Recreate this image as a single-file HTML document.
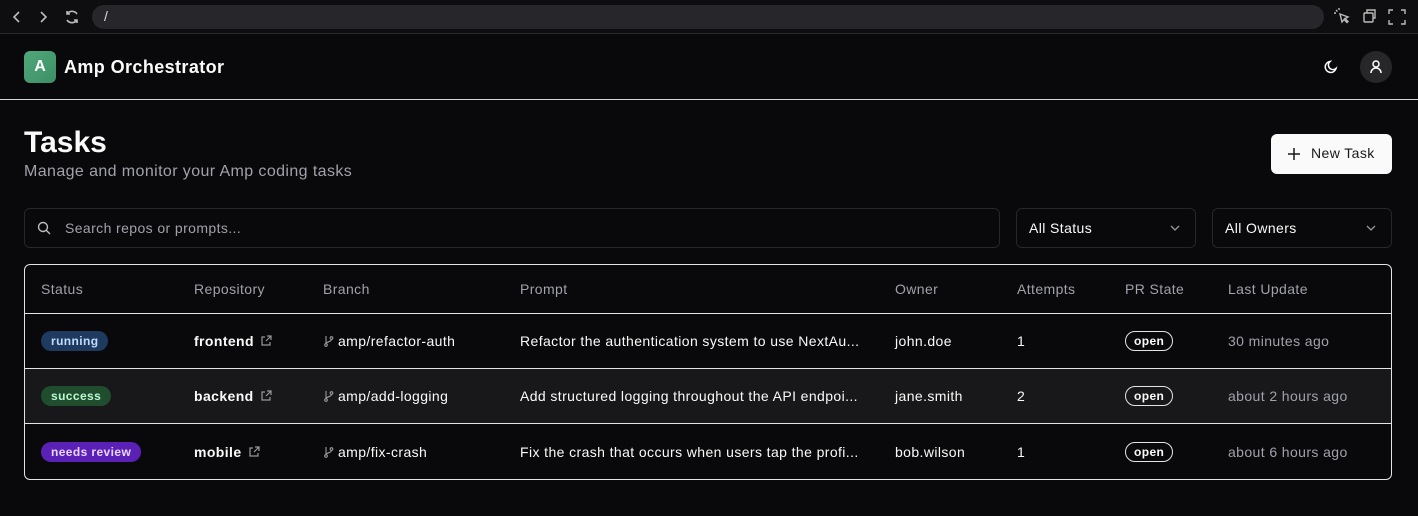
<!DOCTYPE html><html><head><meta charset="utf-8"><style>
*{box-sizing:border-box;margin:0;padding:0}
body{width:1418px;height:516px;background:#09090b;color:#fafafa;font-family:"Liberation Sans",sans-serif;overflow:hidden;position:relative;letter-spacing:0.4px}
.abs{position:absolute}
.chrome{left:0;top:0;width:1418px;height:34px;background:#0e0e10;border-bottom:1px solid #2a2a2d}
.addr{left:92px;top:5px;width:1232px;height:24px;border-radius:12px;background:#27272b;color:#ddd;font-size:14px;padding:3px 12px}
.hdr{left:0;top:35px;width:1418px;height:65px;border-bottom:1px solid #d4d4d8}
.logo{left:24px;top:51px;width:32px;height:32px;border-radius:6px;background:linear-gradient(135deg,#4fa87a,#3d8f66);color:#fff;font-weight:bold;font-size:16px;text-align:center;line-height:32px;letter-spacing:0}
.row{display:grid;grid-template-columns:153px 129px 197px 375px 122px 108px 103px 1fr;padding-left:16px;align-items:center;font-size:14px}
.pill{display:inline-block;border-radius:11px;font-size:12px;font-weight:bold;padding:3px 10px}
.open{display:inline-block;border:1px solid #e4e4e7;border-radius:10px;font-size:12px;font-weight:bold;padding:2px 8px}
.sel{height:40px;border:1px solid #27272a;border-radius:6px;font-size:14px;padding:11px 12px}
.ic{vertical-align:-1px;margin-left:6px}
.br{vertical-align:-1px;margin-right:4px}
</style></head><body>
<div class="abs chrome"></div>
<svg class="abs" style="left:8px;top:9px" width="80" height="16" fill="none" stroke="#bbb" stroke-width="1.6"><path d="M11 3L6 8l5 5"/><path d="M33 3l5 5-5 5"/><path d="M69 5a6 6 0 0 0-10 0M59 2v3h3M59 11a6 6 0 0 0 10 0M69 14v-3h-3"/></svg>
<div class="abs addr">/</div>
<svg class="abs" style="left:1334px;top:8px" width="80" height="18" fill="none" stroke="#bbb" stroke-width="1.4"><path d="M6 6l8 3-3 1.5 3 3-1 1-3-3L8 14z"/><path d="M2 2l1.5 1.5M5 0v2M0 5h2"/><rect x="30" y="5" width="9" height="9" rx="1"/><path d="M33 5V2h8v8h-2"/><path d="M55 6V2h4M67 2h4v4M71 12v4h-4M59 16h-4v-4"/></svg>
<div class="abs hdr"></div>
<div class="abs logo">A</div>
<div class="abs" style="left:64px;top:57px;font-size:18px;font-weight:bold">Amp Orchestrator</div>
<svg class="abs" style="left:1323px;top:59px" width="16" height="16" fill="none" stroke="#fff" stroke-width="1.5"><path d="M13 9.5A5.5 5.5 0 1 1 7 2.5a4.3 4.3 0 0 0 6 7z"/></svg>
<div class="abs" style="left:1360px;top:51px;width:32px;height:32px;border-radius:16px;background:#27272a"></div>
<svg class="abs" style="left:1368px;top:59px" width="16" height="16" fill="none" stroke="#fff" stroke-width="1.5"><circle cx="8" cy="5" r="3"/><path d="M3 14a5 5 0 0 1 10 0"/></svg>
<div class="abs" style="left:24px;top:126px;font-size:30px;font-weight:bold;letter-spacing:0">Tasks</div>
<div class="abs" style="left:24px;top:163px;font-size:16px;color:#a1a1aa">Manage and monitor your Amp coding tasks</div>
<div class="abs" style="left:1271px;top:134px;width:121px;height:40px;border-radius:6px;background:#fafafa;color:#18181b;font-size:14px;padding:11px 0 0 40px">New Task</div>
<svg class="abs" style="left:1287px;top:147px" width="14" height="14" stroke="#18181b" stroke-width="1.5"><path d="M7 1v12M1 7h12"/></svg>
<div class="abs sel" style="left:24px;top:208px;width:976px;padding-left:40px;color:#a1a1aa">Search repos or prompts...</div>
<svg class="abs" style="left:37px;top:221px" width="14" height="14" fill="none" stroke="#bbb" stroke-width="1.4"><circle cx="6" cy="6" r="4.5"/><path d="M9.5 9.5L13 13"/></svg>
<div class="abs sel" style="left:1016px;top:208px;width:180px">All Status</div>
<div class="abs sel" style="left:1212px;top:208px;width:180px">All Owners</div>
<svg class="abs" style="left:1169px;top:223px" width="12" height="10" fill="none" stroke="#999" stroke-width="1.3"><path d="M2 3l4 4 4-4"/></svg>
<svg class="abs" style="left:1365px;top:223px" width="12" height="10" fill="none" stroke="#999" stroke-width="1.3"><path d="M2 3l4 4 4-4"/></svg>
<div class="abs" style="left:24px;top:264px;width:1368px;height:216px;border:1px solid #e4e4e7;border-radius:6px;overflow:hidden">
<div class="row" style="height:49px;color:#a1a1aa;border-bottom:1px solid #e4e4e7"><div>Status</div><div>Repository</div><div>Branch</div><div>Prompt</div><div>Owner</div><div>Attempts</div><div>PR State</div><div>Last Update</div></div>
<div class="row" style="height:55px;border-bottom:1px solid #e4e4e7"><div><span class="pill" style="background:#1e3a5f;color:#bfdbfe">running</span></div><div><b>frontend</b><svg class="ic" width="12" height="12" fill="none" stroke="#999" stroke-width="1.2"><path d="M5 2H2v8h8V7M7 1h4v4M11 1L6 6"/></svg></div><div><svg class="br" width="11" height="12" fill="none" stroke="#999" stroke-width="1.1"><circle cx="3" cy="10" r="1.3"/><circle cx="8.5" cy="3" r="1.3"/><path d="M3 1v7.7M8.5 4.3c0 3-5.5 2-5.5 4.5"/></svg>amp/refactor-auth</div><div>Refactor the authentication system to use NextAu...</div><div>john.doe</div><div>1</div><div><span class="open">open</span></div><div style="color:#a1a1aa">30 minutes ago</div></div>
<div class="row" style="height:55px;border-bottom:1px solid #e4e4e7;background:#18181b"><div><span class="pill" style="background:#1f4d2e;color:#bbf7d0">success</span></div><div><b>backend</b><svg class="ic" width="12" height="12" fill="none" stroke="#999" stroke-width="1.2"><path d="M5 2H2v8h8V7M7 1h4v4M11 1L6 6"/></svg></div><div><svg class="br" width="11" height="12" fill="none" stroke="#999" stroke-width="1.1"><circle cx="3" cy="10" r="1.3"/><circle cx="8.5" cy="3" r="1.3"/><path d="M3 1v7.7M8.5 4.3c0 3-5.5 2-5.5 4.5"/></svg>amp/add-logging</div><div>Add structured logging throughout the API endpoi...</div><div>jane.smith</div><div>2</div><div><span class="open">open</span></div><div style="color:#a1a1aa">about 2 hours ago</div></div>
<div class="row" style="height:55px"><div><span class="pill" style="background:#5b21b6;color:#e9d5ff">needs review</span></div><div><b>mobile</b><svg class="ic" width="12" height="12" fill="none" stroke="#999" stroke-width="1.2"><path d="M5 2H2v8h8V7M7 1h4v4M11 1L6 6"/></svg></div><div><svg class="br" width="11" height="12" fill="none" stroke="#999" stroke-width="1.1"><circle cx="3" cy="10" r="1.3"/><circle cx="8.5" cy="3" r="1.3"/><path d="M3 1v7.7M8.5 4.3c0 3-5.5 2-5.5 4.5"/></svg>amp/fix-crash</div><div>Fix the crash that occurs when users tap the profi...</div><div>bob.wilson</div><div>1</div><div><span class="open">open</span></div><div style="color:#a1a1aa">about 6 hours ago</div></div>
</div>
</body></html>
